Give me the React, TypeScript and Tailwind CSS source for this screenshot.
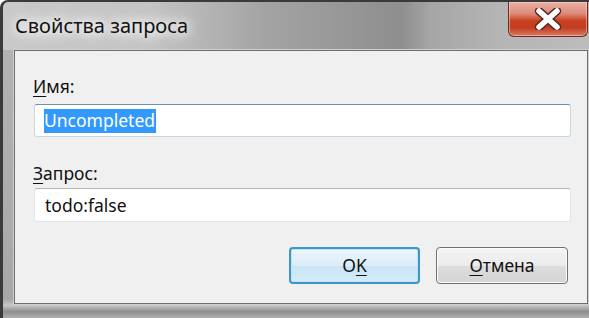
import React from "react";

const font = "font-['Noto_Sans','Open_Sans',sans-serif]";

// label with the access-key letter underlined
const Label = ({ accel, rest }: { accel: string; rest: string }) => (
  <div className="h-6 text-[17.5px] leading-6 text-[#111]">
    <span className="underline decoration-1 underline-offset-[3px]">{accel}</span>
    {rest}
  </div>
);

const CloseGlyph = () => (
  <svg width="28" height="22" viewBox="0 0 28 22">
    <path
      d="M5 3 L23 19 M23 3 L5 19"
      fill="none"
      stroke="#5b2a22"
      strokeWidth="8.5"
      strokeLinecap="round"
    />
    <path
      d="M5 3 L23 19 M23 3 L5 19"
      fill="none"
      stroke="#ffffff"
      strokeWidth="5.5"
      strokeLinecap="round"
    />
  </svg>
);

export default function App() {
  return (
    <div
      className={`${font} relative flex h-[318px] w-[589px] flex-col overflow-hidden rounded-tl-[8px] border-l-[3px] border-t-2 border-[#3a3a3a] bg-[linear-gradient(to_bottom,#b4b4b4_0%,#a8a8a8_94%,#c6c6c6_96%,#8e8e8e_98%,#b0b0b0_100%)]`}
    >
      {/* title bar */}
      <div className="flex h-[48px] shrink-0 items-center bg-[linear-gradient(to_right,#c9c9c9_0%,#c4c4c4_25%,#a3a3a3_45%,#8e8e8e_68%,#a6a6a6_73%,#b5b5b5_85%,#bcbcbc_100%)] pl-3">
        <span className="text-[20px] leading-none text-[#111] [text-shadow:0_0_8px_#ffffff,0_0_14px_#ffffff,0_0_20px_#f4f4f4]">
          Свойства запроса
        </span>
      </div>

      <div className="absolute right-[1px] top-0 flex h-[35px] w-[80px] items-center justify-center rounded-b-[6px] border border-t-0 border-[#6b2b20] bg-[linear-gradient(to_bottom,#eab1a5_0%,#dd8a78_35%,#c9401f_55%,#c33d22_75%,#d97a62_100%)] shadow-[inset_0_0_0_1px_rgba(255,220,210,0.5)]">
        <CloseGlyph />
      </div>

      {/* client area */}
      <div className="mb-[14px] ml-[11px] mr-[1px] flex flex-1 flex-col border border-[#6e6e6e] bg-[#f0f0f0] pl-[18px] pr-[16px] pt-[23px] shadow-[0_0_0_1px_#d0d0d0]">
        <Label accel="И" rest="мя:" />
        <div className="ml-[1px] mt-[6px] flex h-[33px] items-center rounded-[3px] border border-[#c9d6e3] border-t-[#6f8fb0] bg-white pl-[9px]">
          <span className="flex h-[24px] items-center bg-[#3399ff] pr-[1px] text-[17.5px] text-white">
            Uncompleted
          </span>
        </div>

        <div className="mt-[24px]">
          <Label accel="З" rest="апрос:" />
        </div>
        <div className="ml-[1px] mt-[3px] flex h-[34px] items-center rounded-[3px] border border-[#e2e6eb] border-t-[#b0b4ba] bg-white pl-[10px] text-[17.5px] text-[#111]">
          todo:false
        </div>

        <div className="mt-[25px] flex justify-end gap-[16px] pr-[3px]">
          <button className="flex h-[37px] w-[131px] items-center justify-center rounded-[4px] border-2 border-[#3d95c8] bg-[linear-gradient(to_bottom,#ecf6fc_0%,#dcedf8_50%,#c9e4f5_52%,#d6ecf8_100%)] text-[17.5px] text-[#111] shadow-[inset_0_0_0_1px_#bfe3f7]">
            O<span className="underline decoration-1 underline-offset-[3px]">K</span>
          </button>
          <button className="flex h-[37px] w-[132px] items-center justify-center rounded-[4px] border border-[#707070] bg-[linear-gradient(to_bottom,#f4f4f4_0%,#ebebeb_50%,#dddddd_52%,#d4d4d4_100%)] text-[17.5px] text-[#111] shadow-[inset_0_0_0_1px_#fcfcfc]">
            <span className="underline decoration-1 underline-offset-[3px]">О</span>тмена
          </button>
        </div>
      </div>
    </div>
  );
}
